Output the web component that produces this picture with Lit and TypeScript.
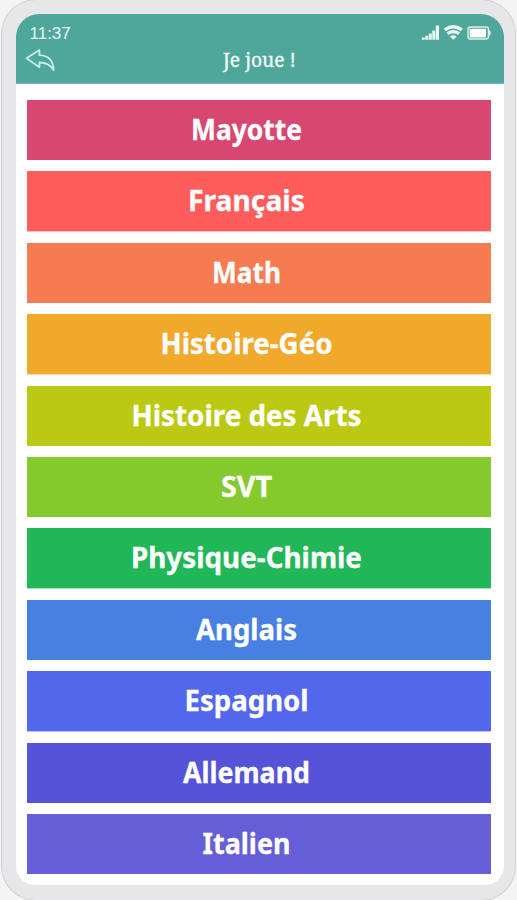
import { LitElement, html, css, svg } from "lit";
import { customElement } from "lit/decorators.js";

interface Subject {
  name: string;
  color: string;
  width: number;
}

const SUBJECTS: Subject[] = [
  { name: "Mayotte", color: "#d84771", width: 111 },
  { name: "Français", color: "#ff5c5c", width: 117 },
  { name: "Math", color: "#f67b50", width: 69 },
  { name: "Histoire-Géo", color: "#f1a92b", width: 172 },
  { name: "Histoire des Arts", color: "#bbc913", width: 230 },
  { name: "SVT", color: "#85ca2d", width: 51 },
  { name: "Physique-Chimie", color: "#21b757", width: 231 },
  { name: "Anglais", color: "#4780e1", width: 101 },
  { name: "Espagnol", color: "#5367ec", width: 124 },
  { name: "Allemand", color: "#5554d9", width: 127 },
  { name: "Italien", color: "#665ed6", width: 88 },
];

@customElement("subject-button")
class SubjectButton extends LitElement {
  static properties = { subject: { attribute: false } };
  declare subject: Subject;

  static styles = css`
    :host { display: block; height: 60.4px; }
    svg { display: block; width: 100%; height: 100%; }
    .label { font: 700 29px "Noto Sans", sans-serif; fill: #fff; stroke: #fff; stroke-width: 0.3px; text-anchor: middle; }
  `;

  render() {
    const { name, color, width } = this.subject;
    return html`<svg viewBox="0 0 464 60.4" role="button" aria-label=${name}>
      <rect width="464" height="60.4" fill=${color}></rect>
      <text class="label" x="219.5" y="40.2" textLength=${width} lengthAdjust="spacingAndGlyphs">${name}</text>
    </svg>`;
  }
}

@customElement("app-root")
class AppRoot extends LitElement {
  static styles = css`
    :host { display: block; width: 517px; height: 900px; background: #f4f4f4; overflow: hidden; }
    .phone {
      box-sizing: border-box; width: 513px; height: 900px; margin-left: 2px;
      padding: 14px 11.5px 15px 13.5px; border-radius: 34px; background: #e7e7e9;
      box-shadow: 0 0 0 1px #d2d2d4;
    }
    .screen {
      height: 871px; border-radius: 23px 23px 19px 19px; overflow: hidden; background: #fff;
      display: flex; flex-direction: column;
    }
    .head { box-sizing: border-box; height: 70px; background: #4fa69b; border-bottom: 1px solid #76acd8; }
    .status { display: flex; justify-content: space-between; padding: 9px 12px 0 14px; height: 20px; }
    .time { font: 17px/21px "Liberation Sans", sans-serif; color: #e8f8f5; letter-spacing: 0; }
    .icons { width: 71px; height: 20px; }
    .bar { display: grid; grid-template-columns: 32px 1fr 32px; padding: 3px 10px 0 9px; }
    .back { width: 32px; height: 26px; }
    .title { width: 85px; height: 32px; justify-self: center; }
    .title text { font: 20px "Noto Serif", "Liberation Serif", serif; fill: #effbf8; stroke: #effbf8; stroke-width: 0.3px; }
    .list { display: flex; flex-direction: column; gap: 11px; padding: 16px 12.5px 0 11.5px; }
  `;

  render() {
    return html`<div class="phone"><main class="screen">
      <header class="head">
        <div class="status">
          <span class="time">11:37</span>
          <svg class="icons" viewBox="0 0 71 20">${svg`
            <g fill="#e9f8ee">
              <path d="M.8 14.6h3v2.2h-3zM4.3 12.8h3v4h-3zM7.8 10.6h3v6.2h-3zM11.3 7.4h3v9.4h-3zM14.8 2.6h3.2v14.2h-3.2z"/>
              <rect x="47" y="4" width="20.5" height="12" rx="2.5" fill="none" stroke="#d9f3e4" stroke-width="1.4"/>
              <rect x="48.6" y="5.7" width="16.5" height="8.7" rx="0.8" fill="#fff"/>
              <path d="M67.5 6.5q2.3 1 2.3 3.5t-2.3 3.5z"/>
              <path d="M32.3 16.8l-3.4-3.4q3.4-2.2 6.8 0z"/>
            </g>
            <path d="M23.7 6.9q8.6-6.2 17.2 0M26.5 10.6q5.8-4 11.6 0" fill="none" stroke="#e9f8ee" stroke-width="3.3"/>`}
          </svg>
        </div>
        <div class="bar">
          <svg class="back" viewBox="0 0 32 26"><path d="M1.5 12.3 14.4 4v5.2C23 9.6 28.3 14.8 28.6 24.2 25.8 19.2 21.8 16.6 14.4 16.5v4.8z" fill="none" stroke="#c9ebe8" stroke-width="1.8" stroke-linejoin="round"/></svg>
          <svg class="title" viewBox="0 0 85 32"><text x="6" y="21.2" textLength="73" lengthAdjust="spacingAndGlyphs">Je joue !</text></svg>
        </div>
      </header>
      <nav class="list">${SUBJECTS.map((s) => html`<subject-button .subject=${s}></subject-button>`)}</nav>
    </main></div>`;
  }
}
